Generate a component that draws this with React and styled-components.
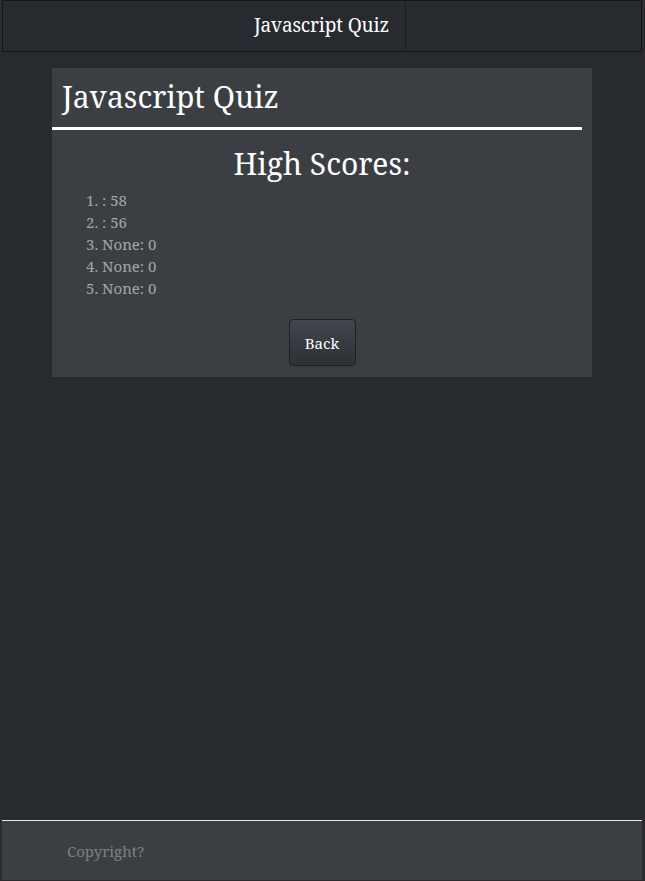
import React from "react";
import styled, { createGlobalStyle } from "styled-components";

const GlobalStyle = createGlobalStyle`
  html, body {
    margin: 0;
    padding: 0;
    background: #2b2c2e;
  }
  body {
    font-family: "Noto Serif", "DejaVu Serif", "Liberation Serif", serif;
  }
`;

const Page = styled.div`
  width: 640px;
  margin-left: 2px;
  min-height: 880px;
  display: flex;
  flex-direction: column;
  background: #272a2f;
`;

const Header = styled.header`
  display: flex;
  height: 50px;
  border: 1px solid #141518;
  background: #272a2f;
`;

const HeaderTitle = styled.div`
  width: 386px;
  padding: 0 16px 2px 0;
  border-right: 1px solid #1b1d20;
  display: flex;
  align-items: center;
  justify-content: flex-end;
  color: #ffffff;
  font-size: 19px;
  letter-spacing: -0.15px;
`;

const Main = styled.main`
  flex: 1;
  padding: 16px 48px 0 50px;
`;

const Card = styled.section`
  width: 540px;
  background: #3b3f44;
  padding-bottom: 11px;
`;

const CardTitle = styled.h1`
  margin: 0;
  padding: 9px 10px 10px;
  font-size: 30px;
  line-height: 40px;
  font-weight: 400;
  color: #ffffff;
`;

const Rule = styled.hr`
  margin: 0;
  width: 530px;
  height: 3px;
  border: 0;
  background: #ffffff;
`;

const ScoresTitle = styled.h2`
  margin: 16px 0 7px;
  text-align: center;
  font-size: 30px;
  line-height: 36px;
  font-weight: 400;
  color: #ffffff;
`;

const ScoreList = styled.ol`
  margin: 0;
  padding: 0 0 0 34px;
  list-style: none;
`;

const ScoreItem = styled.li`
  font-size: 15px;
  line-height: 22px;
  color: #a3a6a9;
`;

const ButtonRow = styled.div`
  display: flex;
  justify-content: center;
  margin-top: 20px;
`;

const Button = styled.button`
  width: 67px;
  height: 47px;
  border: 1px solid #1e2024;
  border-radius: 4px;
  background: linear-gradient(#42464d, #2d3035);
  color: #ffffff;
  font-family: inherit;
  font-size: 15px;
  cursor: pointer;
`;

const Footer = styled.footer`
  height: 59px;
  border-top: 1px solid #e8e8ea;
  background: #3b3f44;
  display: flex;
  align-items: center;
  padding-left: 65px;
  color: #7b8186;
  font-size: 15px;
`;

const scores = [": 58", ": 56", "None: 0", "None: 0", "None: 0"];

export default function App() {
  return (
    <>
      <GlobalStyle />
      <Page>
        <Header>
          <HeaderTitle>Javascript Quiz</HeaderTitle>
        </Header>
        <Main>
          <Card>
            <CardTitle>Javascript Quiz</CardTitle>
            <Rule />
            <ScoresTitle>High Scores:</ScoresTitle>
            <ScoreList>
              {scores.map((s, i) => (
                <ScoreItem key={i}>
                  {i + 1}. {s}
                </ScoreItem>
              ))}
            </ScoreList>
            <ButtonRow>
              <Button>Back</Button>
            </ButtonRow>
          </Card>
        </Main>
        <Footer>Copyright?</Footer>
      </Page>
    </>
  );
}
